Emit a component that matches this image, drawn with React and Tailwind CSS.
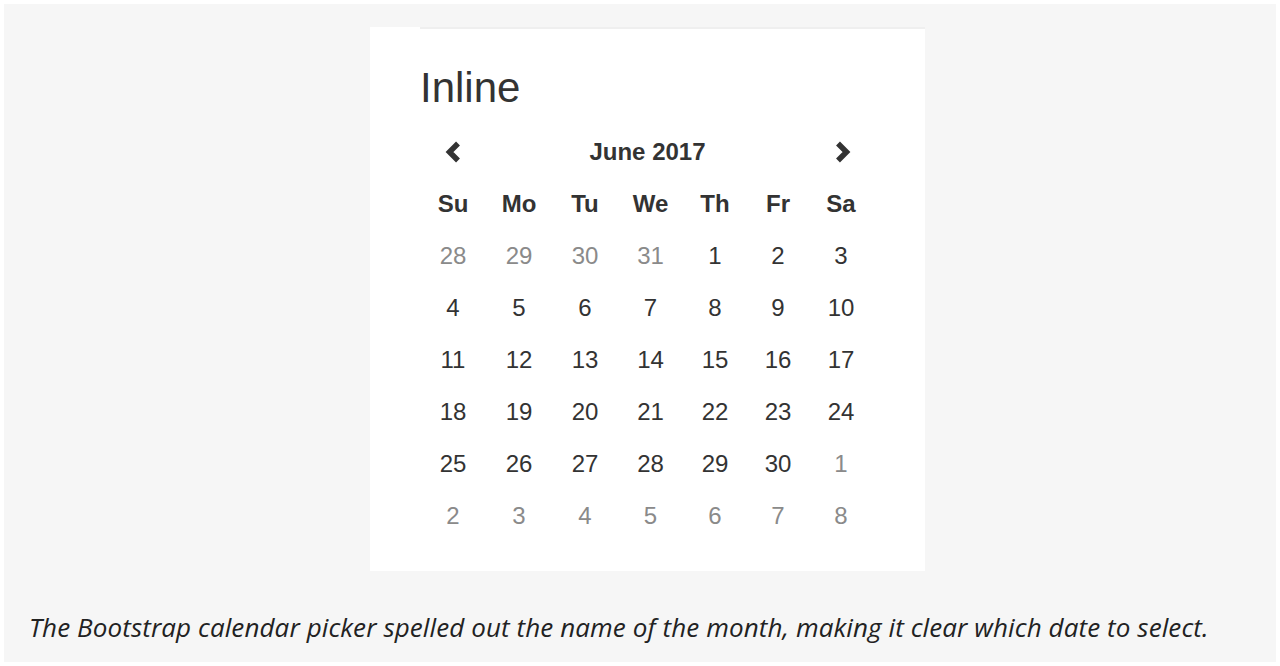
import React from "react";

const weeks = [
  [["28", 1], ["29", 1], ["30", 1], ["31", 1], ["1", 0], ["2", 0], ["3", 0]],
  [["4", 0], ["5", 0], ["6", 0], ["7", 0], ["8", 0], ["9", 0], ["10", 0]],
  [["11", 0], ["12", 0], ["13", 0], ["14", 0], ["15", 0], ["16", 0], ["17", 0]],
  [["18", 0], ["19", 0], ["20", 0], ["21", 0], ["22", 0], ["23", 0], ["24", 0]],
  [["25", 0], ["26", 0], ["27", 0], ["28", 0], ["29", 0], ["30", 0], ["1", 1]],
  [["2", 1], ["3", 1], ["4", 1], ["5", 1], ["6", 1], ["7", 1], ["8", 1]],
];

const days = ["Su", "Mo", "Tu", "We", "Th", "Fr", "Sa"];

function Chevron({ dir }) {
  return (
    <svg width="18" height="24" viewBox="0 0 18 24" className="block">
      <polyline
        points={dir === "left" ? "14,3.5 5.5,12 14,20.5" : "4,3.5 12.5,12 4,20.5"}
        fill="none"
        stroke="#333"
        strokeWidth="5.5"
        strokeLinejoin="miter"
      />
    </svg>
  );
}

const cols = "grid grid-cols-[66px_66px_66px_65px_64px_62px_64px]";

export default function App() {
  return (
    <div className="bg-white pt-[4px] pl-[4px] w-[1280px] h-[666px]">
      <div className="bg-[#f6f6f6] w-[1272px] h-[658px] pt-[23px] pl-[366px]">
        <div className="w-[555px] h-[544px] bg-white" style={{ fontFamily: '"Liberation Sans", Arial, sans-serif' }}>
          <div className="ml-[50px] h-[2px] bg-[#efefef]" />
          <div className="pl-[50px] pt-[38px]">
            <div className="text-[42px] leading-[42px] text-[#333]">Inline</div>
            <div className="mt-[17px] text-[#333]">
              <div className={cols + " h-[52px] items-center"}>
                <div className="flex justify-center">
                  <Chevron dir="left" />
                </div>
                <div className="col-span-5 text-center text-[24px] font-bold">June 2017</div>
                <div className="flex justify-center pl-[3px]">
                  <Chevron dir="right" />
                </div>
              </div>
              <div className={cols + " h-[52px] items-center"}>
                {days.map((d) => (
                  <div key={d} className="text-center text-[24px] font-bold leading-[52px]">
                    {d}
                  </div>
                ))}
              </div>
              {weeks.map((w, i) => (
                <div key={i} className={cols + " h-[52px]"}>
                  {w.map(([n, m], j) => (
                    <div
                      key={j}
                      className={
                        "text-center text-[24px] leading-[52px] " +
                        (m ? "text-[#8a8a8a]" : "text-[#333]")
                      }
                    >
                      {n}
                    </div>
                  ))}
                </div>
              ))}
            </div>
          </div>
        </div>
        <p
          className="-ml-[341px] mt-[40px] text-[26px] leading-[32px] italic text-[#222] tracking-[0.1px] whitespace-nowrap"
          style={{ fontFamily: '"Open Sans", sans-serif' }}
        >
          The Bootstrap calendar picker spelled out the name of the month, making it clear which date to select.
        </p>
      </div>
    </div>
  );
}
